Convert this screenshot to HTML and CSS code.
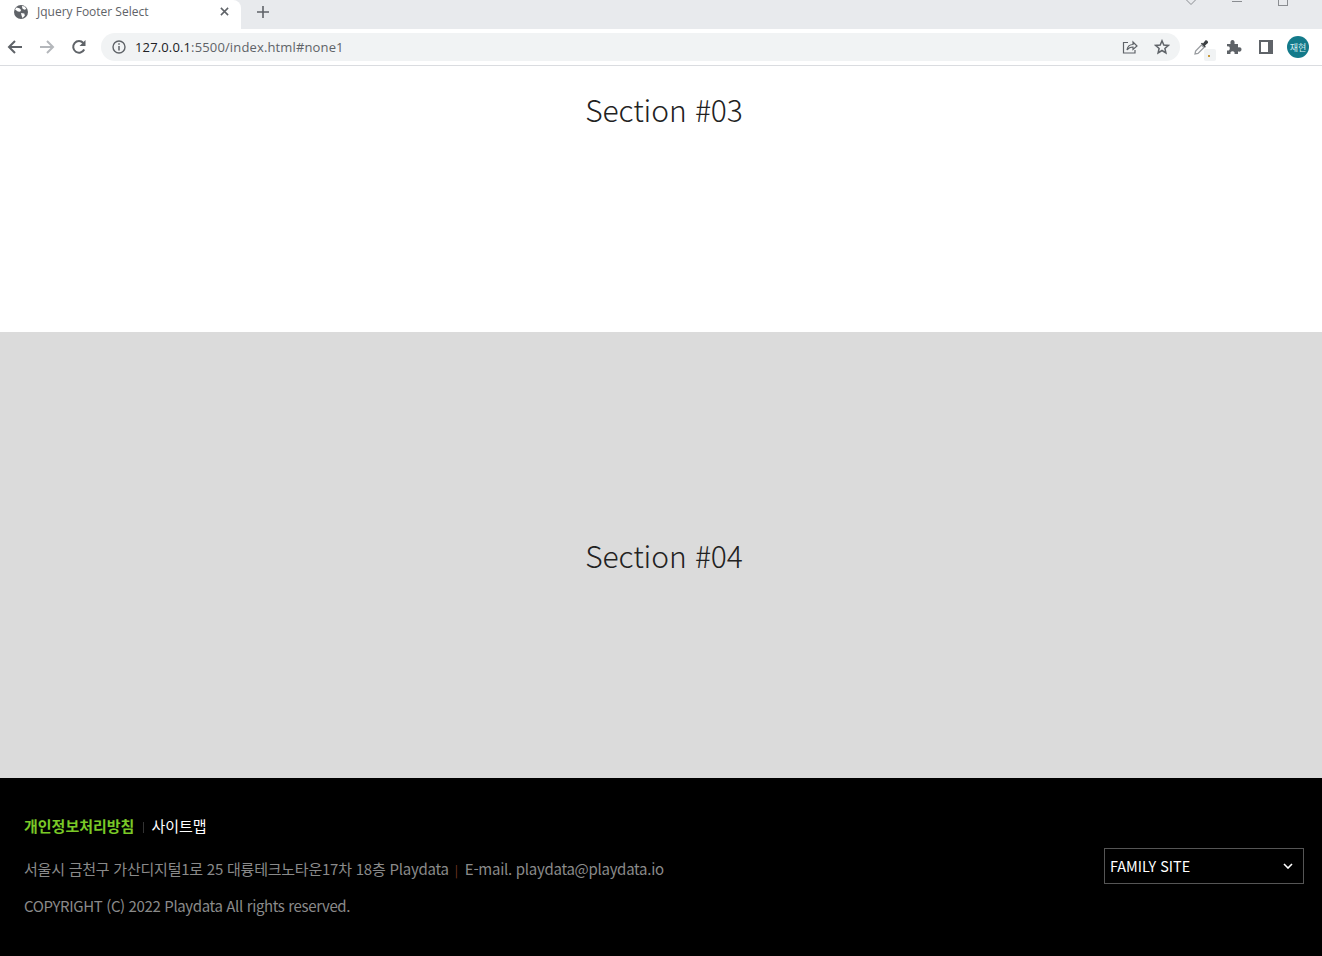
FILE: index.html
```html
<!DOCTYPE html>
<html lang="ko">
<head>
    <meta charset="UTF-8">
    <title>Jquery Footer Select</title>
    <link rel="stylesheet" href="styles.css">
</head>
<body>
    <div class="browser">
        <div class="tabstrip">
            <div class="tab">
                <svg class="favicon" viewBox="0 0 16 16"><circle cx="8" cy="8" r="8" fill="#5f6368"/><path d="M2.800 2.800l3.400.8 2 2-1.200 2.200-2.600-.3L1.200 5zM9 1.200l3.200.6 2 2.700-2.400.9-2.200-1.400zM8 9.200l3.800.5.600 2.500-2.700 2.600-1.100-2.800z" fill="#fff"/></svg>
                <span class="tab-title">Jquery Footer Select</span>
                <svg class="tab-close" viewBox="0 0 10 10"><path d="M1 1l8 8M9 1l-8 8" stroke="#5f6368" stroke-width="1.700"/></svg>
            </div>
            <svg class="new-tab" viewBox="0 0 12 12"><path d="M6 0v12M0 6h12" stroke="#5f6368" stroke-width="1.600"/></svg>
            <div class="window-btns">
                <svg class="win-chevron" viewBox="0 0 10 5"><path d="M.5 0l4.500 4.500L9.500 0" fill="none" stroke="#8a8d91"/></svg>
                <span class="win-min"></span>
                <span class="win-max"></span>
            </div>
        </div>
        <div class="toolbar">
            <svg class="nav-icon" viewBox="0 0 16 16"><path d="M15 8H2M8 2L2 8l6 6" fill="none" stroke="#5f6368" stroke-width="2"/></svg>
            <svg class="nav-icon" viewBox="0 0 16 16"><path d="M1 8h13M8 2l6 6-6 6" fill="none" stroke="#b4b7bb" stroke-width="2"/></svg>
            <svg class="nav-icon" viewBox="0 0 16 16"><path d="M13.200 10.500A5.800 5.800 0 1 1 12.300 4" fill="none" stroke="#5f6368" stroke-width="2"/><path d="M14.500 1v6h-6z" fill="#5f6368"/></svg>
            <div class="omnibox">
                <svg class="info-icon" viewBox="0 0 14 14"><circle cx="7" cy="7" r="6" fill="none" stroke="#5f6368" stroke-width="1.400"/><path d="M7 6v4.500M7 3.300v1.500" stroke="#5f6368" stroke-width="1.500"/></svg>
                <span class="url"><span class="url-host">127.0.0.1</span>:5500/index.html#none1</span>
                <svg class="omni-icon share" viewBox="0 0 16 16"><path d="M6 3.500H1.500v10.500H13V11" fill="none" stroke="#5f6368" stroke-width="1.200"/><path d="M5 11c.500-3.500 3-5.500 6-5.500V3l4 4-4 3.500V8c-2.500 0-4.500 1-6 3z" fill="none" stroke="#5f6368" stroke-width="1.200"/></svg>
                <svg class="omni-icon star" viewBox="0 0 16 16"><path d="M8 1.800l1.800 4.200 4.500.4-3.400 3 1 4.500L8 11.500l-3.900 2.400 1-4.500-3.400-3 4.500-.4z" fill="none" stroke="#5f6368" stroke-width="1.500"/></svg>
            </div>
            <div class="ext ext-dropper">
                <svg class="ext-icon" viewBox="0 0 16 16"><path d="M1 15l.6-3L7.500 6l2.500 2.500L4 14.400z" fill="#fff" stroke="#9a9da1" stroke-width="1.300"/><path d="M6.800 4.300l1.300-.6.900.7 2.300-2.900c1.200-1 3.500 1 2.600 2.500l-2.900 2.500.7.900-.6 1.300z" fill="#3c4043"/></svg>
                <span class="ext-badge"><i></i></span>
            </div>
            <svg class="ext-icon puzzle" viewBox="0 0 16 16"><path d="M1 5h3.500C4 2.500 5 1 6.500 1S9 2.500 8.500 5H12v3.500c2.500-.5 3.500.5 3.500 2s-1 2.500-3.500 2V15H8.500c.5-2-.5-2.800-2-2.800s-2.500.8-2 2.800H1v-3.500c2 .3 2.800-.5 2.800-2S3 7 1 7.500z" fill="#5f6368"/></svg>
            <div class="side-panel"><span></span></div>
            <div class="avatar">재현</div>
        </div>
    </div>

    <section class="section section-03">
        <h2>Section #03</h2>
    </section>
    <section class="section section-04">
        <h2>Section #04</h2>
    </section>

    <footer class="footer">
        <div class="footer-info">
            <ul class="footer-links">
                <li><a class="privacy" href="#">개인정보처리방침</a></li>
                <li><a href="#">사이트맵</a></li>
            </ul>
            <p class="address">서울시 금천구 가산디지털1로 25 대륭테크노타운17차 18층 Playdata<span class="bar">|</span><span class="email">E-mail. playdata@playdata.io</span></p>
            <p class="copyright">COPYRIGHT (C) 2022 Playdata All rights reserved.</p>
        </div>
        <div class="family-site">
            <span class="family-label">FAMILY SITE</span>
            <svg class="chevron" viewBox="0 0 10 6"><path d="M1 1l4 4 4-4" fill="none" stroke="#fff" stroke-width="1.600"/></svg>
        </div>
    </footer>
</body>
</html>
```

FILE: styles.css
```css
* {
    box-sizing: border-box;
}

html, body {
    margin: 0;
    padding: 0;
    height: 956px;
    overflow: hidden;
}

body {
    font-family: "Noto Sans CJK KR", "Noto Sans", sans-serif;
    background: #fff;
}

/* browser chrome */
.browser {
    height: 66px;
    font-family: "Open Sans", "Noto Sans", sans-serif;
    border-bottom: 1px solid #dadce0;
}

.tabstrip {
    height: 29px;
    background: #e8eaed;
    display: flex;
    align-items: center;
    overflow: hidden;
}

.tab {
    width: 241px;
    height: 29px;
    background: #fff;
    border-top-right-radius: 8px;
    display: flex;
    align-items: center;
    padding: 0 12px 6px 14px;
}

.favicon {
    width: 14px;
    height: 14px;
}

.tab-title {
    margin-left: 9px;
    font-size: 12px;
    color: #5f6368;
    flex: 1;
}

.tab-close {
    width: 9px;
    height: 9px;
}

.new-tab {
    width: 12px;
    height: 12px;
    margin: 0 0 5px 16px;
}

.window-btns {
    margin-left: auto;
    margin-right: 34px;
    display: flex;
    align-items: flex-start;
    align-self: flex-start;
}

.win-chevron {
    width: 10px;
    height: 5px;
}

.win-min {
    width: 10px;
    height: 1px;
    background: #8a8d91;
    margin: 1px 0 0 36px;
}

.win-max {
    width: 10px;
    height: 6px;
    border: 1px solid #8a8d91;
    border-top: none;
    margin-left: 36px;
}

.toolbar {
    height: 36px;
    display: flex;
    align-items: center;
    padding: 0 13px 0 7px;
}

.nav-icon {
    width: 16px;
    height: 16px;
    margin-right: 16px;
}

.omnibox {
    width: 1079px;
    height: 28px;
    margin-left: -2px;
    border-radius: 14px;
    background: #f1f3f4;
    display: flex;
    align-items: center;
    padding: 0 10px 0 11px;
}

.info-icon {
    width: 14px;
    height: 14px;
}

.url {
    margin-left: 9px;
    font-size: 13px;
    letter-spacing: 0.14px;
    color: #5f6368;
    flex: 1;
}

.url-host {
    color: #202124;
}

.omni-icon {
    width: 16px;
    height: 16px;
}

.share {
    margin-right: 16px;
}

.ext {
    position: relative;
    width: 16px;
    height: 16px;
    margin-left: 14px;
}

.ext-icon {
    width: 16px;
    height: 16px;
    display: block;
}

.ext-badge {
    position: absolute;
    left: 10px;
    top: 10px;
    width: 12px;
    height: 12px;
    background: #f1f3f4;
    border-radius: 2px;
}

.ext-badge i {
    position: absolute;
    left: 4px;
    top: 6px;
    width: 2px;
    height: 2px;
    background: #c99a3a;
}

.puzzle {
    margin-left: 16px;
}

.side-panel {
    width: 14px;
    height: 14px;
    background: #5f6368;
    margin-left: 17px;
    padding: 2px 5px 2px 2px;
}

.side-panel span {
    display: block;
    height: 100%;
    background: #fff;
}

.avatar {
    width: 22px;
    height: 22px;
    margin-left: 14px;
    border-radius: 50%;
    background: #137a8a;
    color: #d5eef2;
    font-family: "Noto Sans CJK KR", sans-serif;
    font-size: 9px;
    display: flex;
    align-items: center;
    justify-content: center;
}

/* sections */
.section {
    display: flex;
    justify-content: center;
    padding-left: 6px;
}

.section h2 {
    margin: 0;
    font-size: 30px;
    font-weight: 300;
    line-height: 44px;
    letter-spacing: -0.1px;
    color: #222;
}

.section-03 {
    height: 266px;
    padding-top: 21px;
    background: #fff;
}

.section-04 {
    height: 446px;
    align-items: center;
    background: #dbdbdb;
}

/* footer */
.footer {
    height: 178px;
    background: #000;
    display: flex;
    justify-content: space-between;
    align-items: center;
    padding: 0 18px 0 24px;
}

.footer-info {
    margin-bottom: 2px;
}

.footer-links {
    list-style: none;
    margin: 0 0 19px;
    padding: 0;
    display: flex;
    font-size: 15px;
    line-height: 24px;
}

.footer-links li + li {
    margin-left: 9px;
    padding-left: 8px;
    position: relative;
}

.footer-links li + li::before {
    content: "";
    position: absolute;
    left: 0;
    top: 8px;
    width: 1px;
    height: 11px;
    background: #333;
}

.footer-links a {
    color: #fff;
    text-decoration: none;
}

.footer-links .privacy {
    color: #7ac927;
    font-weight: 700;
}

.address, .copyright {
    margin: 0;
    font-size: 15px;
    line-height: 24px;
    color: #8a8a8a;
}

.address {
    margin-bottom: 12px;
    letter-spacing: -0.23px;
}

.copyright {
    letter-spacing: -0.37px;
}

.email {
    letter-spacing: -0.28px;
}

.bar {
    color: #7a3a26;
    margin: 0 7px 0 6px;
    font-size: 12px;
}

.family-site {
    width: 200px;
    height: 36px;
    margin-bottom: 2px;
    border: 1px solid #555;
    color: #fff;
    font-size: 14.400px;
    display: flex;
    align-items: center;
    justify-content: space-between;
    padding: 0 10px 0 5px;
}

.family-label {
    margin-top: -2px;
}

.chevron {
    width: 10px;
    height: 6px;
}
```
